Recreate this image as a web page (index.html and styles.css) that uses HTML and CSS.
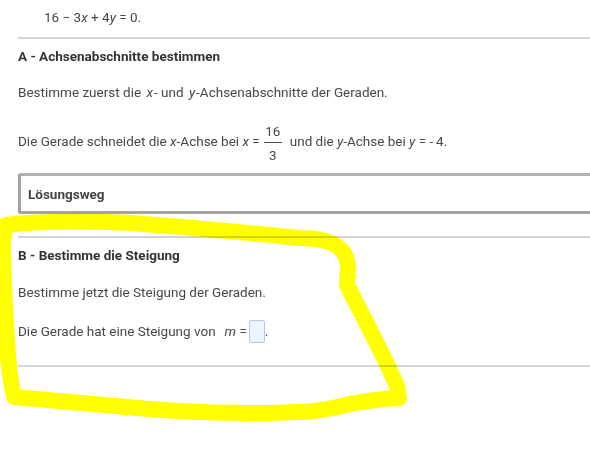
FILE: index.html
```html
<!DOCTYPE html>
<html lang="de">
<head>
<meta charset="utf-8">
<title>Geraden</title>
<link rel="stylesheet" href="styles.css">
</head>
<body>
<div class="page">
  <div class="eq">16 − 3<i>x</i> + 4<i>y</i> = 0.</div>
  <hr class="rule">
  <section class="task">
    <h3 class="task-title">A - Achsenabschnitte bestimmen</h3>
    <p class="para first">Bestimme zuerst die <i class="mi">x</i>- und <i class="mi">y</i>-Achsenabschnitte der Geraden.</p>
    <div class="frac-row">
      <span class="txt">Die Gerade schneidet die <i>x</i>-Achse bei <i>x</i> =</span>
      <span class="frac"><span class="num">16</span><span class="bar"></span><span class="den">3</span></span>
      <span class="txt">und die <i>y</i>-Achse bei <i>y</i> = -&thinsp;4.</span>
    </div>
    <div class="solution"><span class="solution-label">Lösungsweg</span></div>
  </section>
  <hr class="rule">
  <section class="task">
    <h3 class="task-title">B - Bestimme die Steigung</h3>
    <p class="para first">Bestimme jetzt die Steigung der Geraden.</p>
    <div class="input-row">
      <span>Die Gerade hat eine Steigung von</span>
      <span class="math"><i>m</i> =</span>
      <span class="answer"></span><span>.</span>
    </div>
  </section>
  <hr class="rule">
</div>
<svg class="marker" width="590" height="473" viewBox="0 0 590 473" aria-hidden="true">
  <path d="M 6 225 C 40 221, 90 221, 130 223 C 200 228, 260 234, 300 238 C 335 238, 348 250, 348 268 L 347 285 L 370 330 L 385 360 L 397 386 L 399 398 C 380 399, 365 401, 350 404 C 330 409, 315 412, 300 412 C 250 414, 200 413, 150 409 C 100 405, 50 400, 14 397 C 10 380, 8 360, 7 340 C 5 310, 3 280, 3 240 Z"/>
</svg>
</body>
</html>
```

FILE: styles.css
```css
html, body {
  margin: 0;
  padding: 0;
  background: #ffffff;
}

body {
  font-family: Roboto, "Liberation Sans", Arial, sans-serif;
  font-size: 13.5px;
  line-height: 20px;
  color: #484848;
  overflow: hidden;
  width: 590px;
  height: 473px;
  position: relative;
}

.page {
  padding-left: 18px;
  width: 620px;
}

i {
  font-style: italic;
}

.mi {
  margin: 0 1px 0 2px;
}

.eq {
  margin-top: 7px;
  padding-left: 26px;
  height: 20px;
}

.rule {
  margin: 0;
  border: 0;
  height: 2px;
  background: #d4d4d4;
}

.eq + .rule {
  margin-top: 10px;
}

.task {
  display: flex;
  flex-direction: column;
}

.task-title {
  margin: 7px 0 0;
  font-size: 13.5px;
  line-height: 20px;
  font-weight: 700;
  color: #333333;
}

.para {
  margin: 16px 0 0;
}

.frac-row {
  display: flex;
  align-items: flex-start;
  margin-top: 19px;
}

.frac-row .txt {
  margin-top: 10px;
  white-space: nowrap;
}

.frac {
  display: inline-flex;
  flex-direction: column;
  align-items: center;
  width: 18px;
  margin: 0 8px 0 4px;
}

.num, .den {
  line-height: 20px;
}

.bar {
  align-self: stretch;
  height: 1px;
  background: #484848;
  margin-top: 1px;
}

.den {
  margin-top: 2px;
}

.solution {
  margin-top: 8px;
  height: 35px;
  border: 3px solid #a3a3a3;
  border-top-color: #b3b3b3;
  border-radius: 3px;
  display: flex;
  align-items: center;
  padding: 0 7px;
  margin-bottom: 22px;
}

.solution-label {
  font-weight: 700;
  color: #444444;
}

.task + .rule {
  margin-top: 0;
}

.input-row {
  display: flex;
  align-items: center;
  height: 24px;
  margin-top: 17px;
  margin-bottom: 22px;
  white-space: nowrap;
}

.input-row .math {
  margin-left: 9px;
  margin-right: 2px;
}

.answer {
  display: inline-block;
  width: 14px;
  height: 21px;
  border: 1px solid #a9cbf2;
  border-radius: 2px;
  background: #edf4fd;
}

.task:last-of-type .para.first {
  margin-top: 17px;
}

.marker {
  position: absolute;
  left: 0;
  top: 0;
  pointer-events: none;
  mix-blend-mode: multiply;
}

.marker path {
  fill: none;
  stroke: #ffff00;
  stroke-width: 16;
  stroke-linejoin: round;
  stroke-linecap: round;
}
```
